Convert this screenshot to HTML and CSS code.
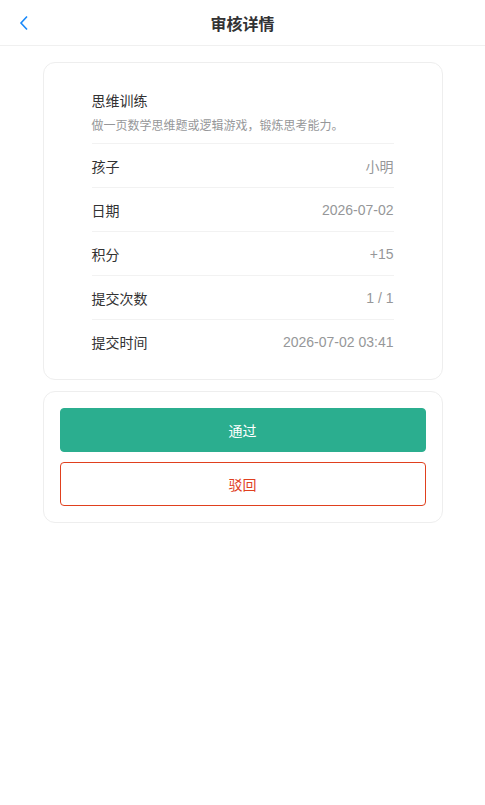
FILE: index.html
```html
<!DOCTYPE html>
<html lang="zh-CN">
<head>
    <meta charset="UTF-8">
    <meta name="viewport" content="width=device-width, initial-scale=1.0">
    <title>审核详情</title>
    <link rel="stylesheet" href="styles.css">
</head>
<body>
    <div class="nav">
        <a class="nav-back" href="#">
            <svg width="10" height="16" viewBox="0 0 10 16"><path d="M8 1.5 L2 8 L8 14.5" fill="none" stroke="#1989fa" stroke-width="1.6"/></svg>
        </a>
        <div class="nav-title">审核详情</div>
    </div>

    <div class="wrapper">
        <div class="card">
            <div class="task">
                <div class="task-name">思维训练</div>
                <div class="task-desc">做一页数学思维题或逻辑游戏，锻炼思考能力。</div>
            </div>
            <div class="row"><span class="label">孩子</span><span class="value">小明</span></div>
            <div class="row"><span class="label">日期</span><span class="value">2026-07-02</span></div>
            <div class="row"><span class="label">积分</span><span class="value">+15</span></div>
            <div class="row"><span class="label">提交次数</span><span class="value">1 / 1</span></div>
            <div class="row"><span class="label">提交时间</span><span class="value">2026-07-02 03:41</span></div>
        </div>

        <div class="card actions">
            <button class="btn btn-pass">通过</button>
            <button class="btn btn-reject">驳回</button>
        </div>
    </div>
</body>
</html>
```

FILE: styles.css
```css
body {
    font-family: "Liberation Sans", Arial, "Noto Sans CJK SC", sans-serif;
    margin: 0;
    padding: 0;
    background: #fff;
    color: #323233;
}

/* Navigation Bar */
.nav {
    height: 45px;
    border-bottom: 1px solid #f0f0f0;
    display: flex;
    align-items: center;
    justify-content: center;
    position: relative;
}

.nav-back {
    position: absolute;
    left: 19px;
    top: 15px;
    display: flex;
}

.nav-title {
    font-size: 16px;
    font-weight: bold;
    color: #323233;
}

.wrapper {
    max-width: 400px;
    margin: 16px auto 0;
}

.card {
    border: 1px solid #eeeeee;
    border-radius: 12px;
    padding: 16px 48px;
    margin-bottom: 11px;
}

.task {
    padding: 12px 0 8px;
    border-bottom: 1px solid #f2f2f2;
}

.task-name {
    font-size: 14px;
    line-height: 20px;
    color: #323233;
}

.task-desc {
    font-size: 12px;
    line-height: 18px;
    color: #969799;
    margin-top: 6px;
}

.row {
    display: flex;
    justify-content: space-between;
    align-items: center;
    height: 43px;
    font-size: 14px;
    border-bottom: 1px solid #f2f2f2;
}

.row:last-child {
    border-bottom: none;
}

.label {
    color: #323233;
}

.value {
    color: #969799;
}

.actions {
    padding: 16px;
    display: flex;
    flex-direction: column;
    gap: 10px;
}

.btn {
    height: 44px;
    border-radius: 4px;
    font-size: 14px;
    font-family: inherit;
    cursor: pointer;
}

.btn-pass {
    background: #2bae8f;
    border: 1px solid #2bae8f;
    color: #fff;
}

.btn-reject {
    background: #fff;
    border: 1px solid #e0401e;
    color: #e0401e;
}
```
